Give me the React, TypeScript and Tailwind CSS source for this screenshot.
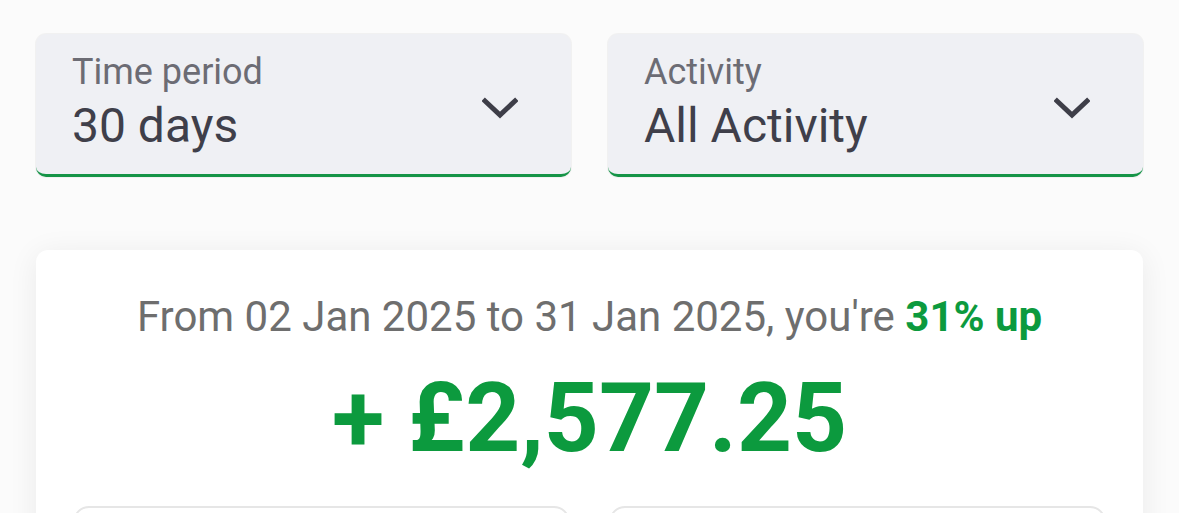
import type { ReactNode } from 'react'

const font = { fontFamily: 'Roboto, "Noto Sans", Arial, sans-serif' }

function Chevron() {
  return (
    <svg width="36" height="24" viewBox="0 0 36 24" fill="none" className="mt-[8px] shrink-0">
      <path d="M3 5 L18 19 L33 5" stroke="#3e3e48" strokeWidth="5" strokeLinecap="square" />
    </svg>
  )
}

function SelectBox({ label, value }: { label: string; value: ReactNode }) {
  return (
    <div className="flex h-[143px] items-center justify-between rounded-[10px] border-b-[3px] border-[#159447] bg-[#eff0f4] pl-[36px] pr-[53px] shadow-[0_0_0_1px_rgba(0,0,0,0.04)]">
      <div className="-mt-[3px] flex flex-col">
        <span className="text-[36px] leading-[40px] text-[#6c6c74]">{label}</span>
        <span className="mt-[6px] text-[48px] leading-[56px] text-[#3f3f4a]">{value}</span>
      </div>
      <Chevron />
    </div>
  )
}

export default function App() {
  return (
    <div className="h-[513px] w-[1179px] overflow-hidden bg-[#fbfbfb]" style={font}>
      <div className="grid grid-cols-2 gap-[37px] px-[36px] pt-[34px]">
        <SelectBox label="Time period" value="30 days" />
        <SelectBox label="Activity" value="All Activity" />
      </div>

      <div className="mx-[36px] mt-[73px] rounded-[12px] bg-white px-[37px] pt-[43px] shadow-[0_4px_30px_rgba(0,0,0,0.07)]">
        <p className="text-center text-[42px] leading-[48px] text-[#6e6e6e]">
          From 02 Jan 2025 to 31 Jan 2025, you're{' '}
          <span className="font-bold text-[#0c9a3e]">31% up</span>
        </p>
        <p className="mt-[21px] text-center text-[96px] font-bold leading-[112px] text-[#0c9a3e]">
          + £2,577.25
        </p>
        <div className="mt-[32px] grid grid-cols-2 gap-[39px]">
          <div className="h-[80px] rounded-[16px] border-2 border-[#e6e6e6] bg-white" />
          <div className="h-[80px] rounded-[16px] border-2 border-[#e6e6e6] bg-white" />
        </div>
      </div>
    </div>
  )
}
